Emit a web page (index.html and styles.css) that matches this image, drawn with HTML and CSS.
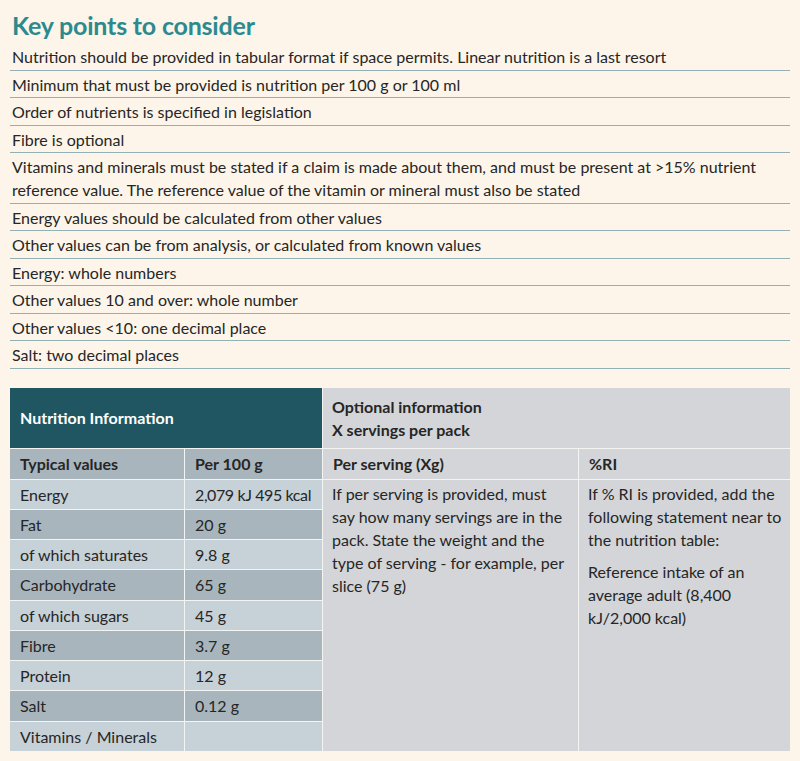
FILE: index.html
```html
<!DOCTYPE html>
<html lang="en">
<head>
<meta charset="utf-8">
<title>Key points to consider</title>
<link rel="stylesheet" href="styles.css">
</head>
<body>
<main class="page">
  <h1 class="title">Key points to consider</h1>
  <ul class="points">
    <li>Nutrition should be provided in tabular format if space permits. Linear nutrition is a last resort</li>
    <li>Minimum that must be provided is nutrition per 100 g or 100 ml</li>
    <li>Order of nutrients is specified in legislation</li>
    <li>Fibre is optional</li>
    <li>Vitamins and minerals must be stated if a claim is made about them, and must be present at &gt;15% nutrient reference value. The reference value of the vitamin or mineral must also be stated</li>
    <li>Energy values should be calculated from other values</li>
    <li>Other values can be from analysis, or calculated from known values</li>
    <li>Energy: whole numbers</li>
    <li>Other values 10 and over: whole number</li>
    <li>Other values &lt;10: one decimal place</li>
    <li>Salt: two decimal places</li>
  </ul>

  <section class="nt">
    <div class="nt-title">Nutrition Information</div>
    <div class="nt-opt">Optional information<br>X servings per pack</div>

    <div class="nt-head dark">Typical values</div>
    <div class="nt-head dark">Per 100 g</div>
    <div class="nt-head grey">Per serving (Xg)</div>
    <div class="nt-head grey">%RI</div>

    <div class="nt-cell light">Energy</div>
    <div class="nt-cell light value">2,079 kJ 495 kcal</div>
    <div class="nt-note serving">
      <p>If per serving is provided, must say how many servings are in the pack. State the weight and the type of serving - for example, per slice (75 g)</p>
    </div>
    <div class="nt-note ri">
      <p>If % RI is provided, add the following statement near to the nutrition table:</p>
      <p>Reference intake of an average adult (8,400 kJ/2,000 kcal)</p>
    </div>

    <div class="nt-cell dark">Fat</div>
    <div class="nt-cell dark">20 g</div>
    <div class="nt-cell light">of which saturates</div>
    <div class="nt-cell light">9.8 g</div>
    <div class="nt-cell dark">Carbohydrate</div>
    <div class="nt-cell dark">65 g</div>
    <div class="nt-cell light">of which sugars</div>
    <div class="nt-cell light">45 g</div>
    <div class="nt-cell dark">Fibre</div>
    <div class="nt-cell dark">3.7 g</div>
    <div class="nt-cell light">Protein</div>
    <div class="nt-cell light">12 g</div>
    <div class="nt-cell dark">Salt</div>
    <div class="nt-cell dark">0.12 g</div>
    <div class="nt-cell light">Vitamins / Minerals</div>
    <div class="nt-cell light"></div>
  </section>
</main>
</body>
</html>
```

FILE: styles.css
```css
html, body {
  margin: 0;
  padding: 0;
}

body {
  background: #fdf5e9;
  font-family: Lato, "Open Sans", "Liberation Sans", sans-serif;
  color: #262626;
  font-size: 16px;
}

.page {
  padding: 10px 10px 0;
}

.title {
  margin: 0 0 3px;
  padding-left: 2px;
  font-size: 25px;
  line-height: 30px;
  font-weight: 700;
  color: #2c8a8f;
  letter-spacing: -0.2px;
}

.points {
  list-style: none;
  margin: 0;
  padding: 0;
}

.points li {
  padding: 2.25px 2px 1.25px;
  line-height: 23px;
  border-bottom: 1px solid #93b0b5;
}

.nt {
  margin-top: 19px;
  display: grid;
  grid-template-columns: 174px 137px 255px 211px;
  grid-template-rows: 60px 30px repeat(9, 29.25px);
  gap: 1px;
  background: #f4f4f2;
}

.nt-title {
  grid-column: 1 / 3;
  background: #1f5661;
  color: #ffffff;
  font-weight: 700;
  display: flex;
  align-items: center;
  padding: 0 10px;
}

.nt-opt {
  grid-column: 3 / 5;
  background: #d3d5d8;
  font-weight: 700;
  line-height: 23px;
  padding: 7px 9px 0;
}

.nt-head,
.nt-cell {
  display: flex;
  align-items: center;
  padding: 0 6px 0 10px;
  white-space: nowrap;
}

.nt-cell.value {
  letter-spacing: -0.4px;
}

.nt-head {
  font-weight: 700;
}

.dark {
  background: #a9b5bc;
}

.light {
  background: #c7d1d8;
}

.grey {
  background: #d3d5d8;
}

.nt-note {
  grid-row: 3 / 12;
  background: #d3d5d8;
  padding: 2px 4px 0 9px;
  line-height: 23px;
}

.nt-note.serving {
  grid-column: 3;
  padding-right: 10px;
}

.nt-note.ri {
  grid-column: 4;
}

.nt-note p {
  margin: 0 0 9px;
}
```
